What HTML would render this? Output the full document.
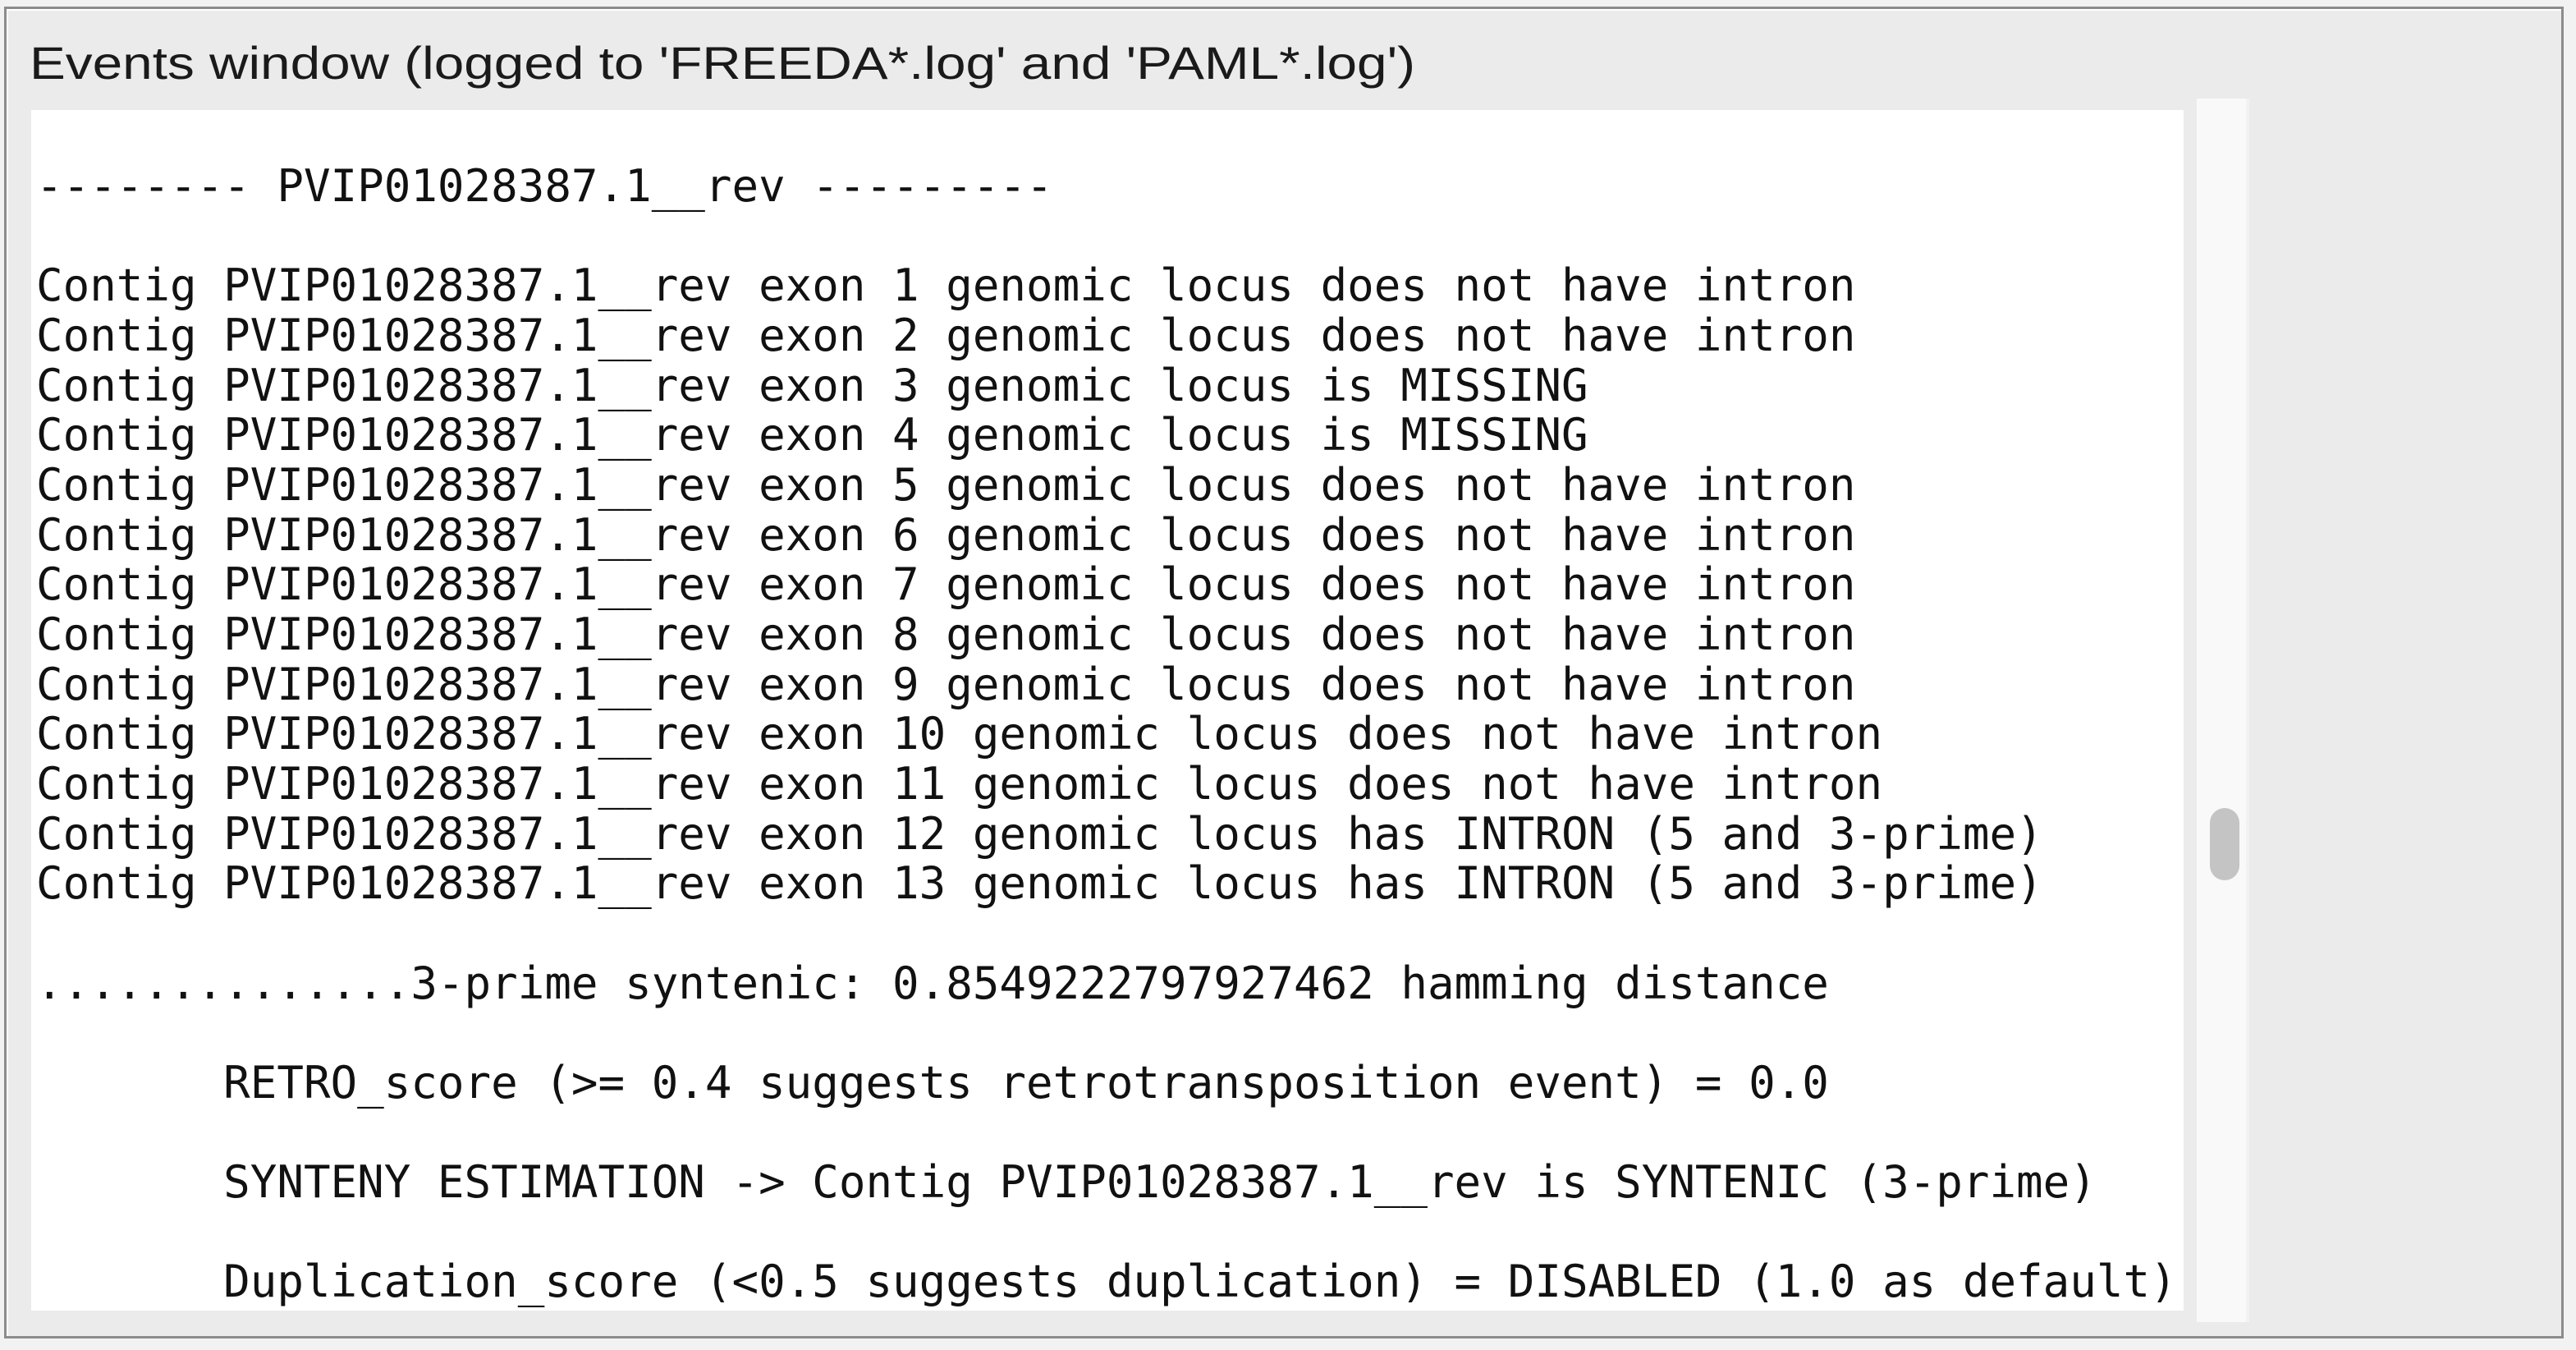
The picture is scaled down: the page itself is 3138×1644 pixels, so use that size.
<!DOCTYPE html>
<html><head><meta charset="utf-8"><style>
html,body{margin:0;padding:0;width:3138px;height:1644px;background:#f2f2f2;overflow:hidden}
#frame{position:absolute;left:5px;top:8px;width:3118px;height:1622px;box-sizing:border-box;border:3px solid #8c8c8c;background:#ebebeb;box-shadow:inset 2px 2px 0 #fff}
#ta{position:absolute;left:38px;top:134px;width:2622px;height:1462px;background:#fff}
#track{position:absolute;left:2676px;top:120px;width:60px;height:1490px;background:#f9f9f9;border-right:4px solid #f2f2f2}
#thumb{position:absolute;left:2692px;top:984px;width:36px;height:88px;border-radius:18px;background:#c4c4c4}
pre{position:absolute;left:44px;top:197px;margin:0;font-family:"DejaVu Sans Mono","Liberation Mono",monospace;font-size:54.15px;line-height:60.66px;color:#111}
svg{position:absolute;left:0;top:0}
</style></head><body>
<div id="frame"></div>
<svg width="3138" height="130"><text x="36" y="96" font-family="Liberation Sans, sans-serif" font-size="56" fill="#1a1a1a" textLength="1688" lengthAdjust="spacingAndGlyphs">Events window (logged to 'FREEDA*.log' and 'PAML*.log')</text></svg>
<div id="ta"></div>
<div id="track"></div>
<div id="thumb"></div>
<pre>-------- PVIP01028387.1__rev ---------

Contig PVIP01028387.1__rev exon 1 genomic locus does not have intron
Contig PVIP01028387.1__rev exon 2 genomic locus does not have intron
Contig PVIP01028387.1__rev exon 3 genomic locus is MISSING
Contig PVIP01028387.1__rev exon 4 genomic locus is MISSING
Contig PVIP01028387.1__rev exon 5 genomic locus does not have intron
Contig PVIP01028387.1__rev exon 6 genomic locus does not have intron
Contig PVIP01028387.1__rev exon 7 genomic locus does not have intron
Contig PVIP01028387.1__rev exon 8 genomic locus does not have intron
Contig PVIP01028387.1__rev exon 9 genomic locus does not have intron
Contig PVIP01028387.1__rev exon 10 genomic locus does not have intron
Contig PVIP01028387.1__rev exon 11 genomic locus does not have intron
Contig PVIP01028387.1__rev exon 12 genomic locus has INTRON (5 and 3-prime)
Contig PVIP01028387.1__rev exon 13 genomic locus has INTRON (5 and 3-prime)

..............3-prime syntenic: 0.8549222797927462 hamming distance

       RETRO_score (&gt;= 0.4 suggests retrotransposition event) = 0.0

       SYNTENY ESTIMATION -&gt; Contig PVIP01028387.1__rev is SYNTENIC (3-prime)

       Duplication_score (&lt;0.5 suggests duplication) = DISABLED (1.0 as default)</pre>
</body></html>
